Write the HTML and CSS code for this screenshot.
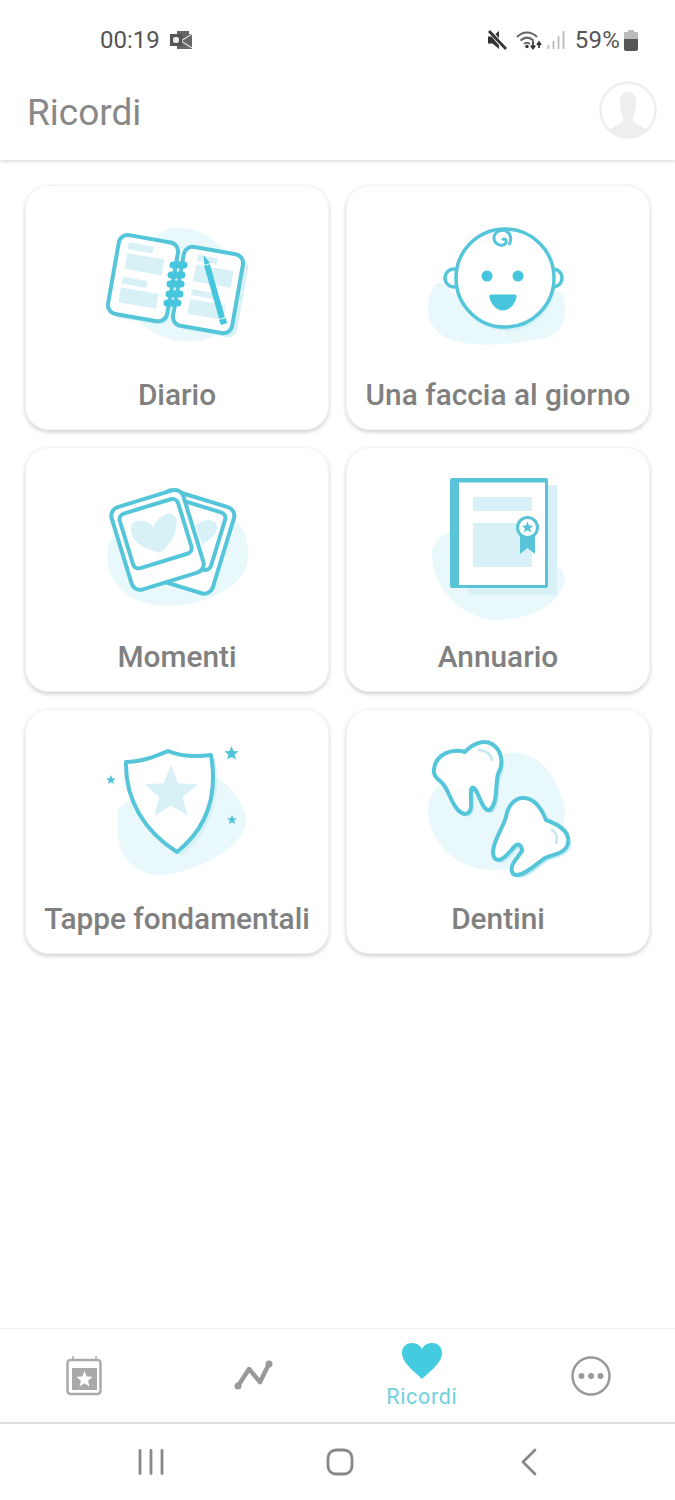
FILE: index.html
```html
<!DOCTYPE html>
<html lang="en">
<head>
    <meta charset="UTF-8">
    <meta name="viewport" content="width=device-width, initial-scale=1.0">
    <title>Ricordi</title>
    <link rel="stylesheet" href="styles.css">
</head>
<body>
<svg class="defs" width="0" height="0">
    <symbol id="star" viewBox="-10 -10 20 20">
        <polygon points="0,-10 2.6,-3.5 9.5,-3.1 4.2,1.4 5.9,8.1 0,4.5 -5.9,8.1 -4.2,1.4 -9.5,-3.1 -2.6,-3.5"/>
    </symbol>
</svg>

<header class="top">
    <div class="status">
        <span class="time">00:19</span>
        <svg class="st-outlook" width="22" height="18" viewBox="0 0 22 18">
            <path d="M7 0 H19 V3 H22 V18 H7 Z" fill="#666"/>
            <path d="M11 10 L22 3 M11 10 L22 17" stroke="#ddd" stroke-width="1.200" fill="none"/>
            <rect x="0" y="3" width="12" height="12" fill="#555"/>
            <rect x="3" y="6" width="6" height="6" rx="2.500" fill="#eee"/>
        </svg>
        <div class="status-right">
            <svg width="20" height="20" viewBox="0 0 20 20">
                <path d="M1 6.500 H5.500 L12 1 V19 L5.500 13.500 H1 Z" fill="#333"/>
                <path d="M2 0 L19 20" stroke="#fff" stroke-width="4.500"/>
                <path d="M2 1 L19 19" stroke="#333" stroke-width="2.800"/>
            </svg>
            <svg class="st-wifi" width="26" height="20" viewBox="0 0 26 20">
                <path d="M1 7 C7 1 15 1 21 7 M4.500 10.500 C9 6.500 13 6.500 17.500 10.500 M8 14 C10 12.300 12 12.300 14 14" fill="none" stroke="#666" stroke-width="2"/>
                <circle cx="11" cy="16.500" r="1.700" fill="#333"/>
                <path d="M17 11 V18 M14.800 15.500 L17 18.500 L19.200 15.500 M23 18 V13 M21 15 L23 12 L25 15" fill="none" stroke="#333" stroke-width="1.700"/>
            </svg>
            <svg class="st-signal" width="18" height="20" viewBox="0 0 18 20">
                <path d="M1.500 19 V15 M6.500 19 V11 M11.500 19 V6 M16.500 19 V1" stroke="#bbb" stroke-width="1.800"/>
            </svg>
            <span class="pct">59%</span>
            <svg class="st-battery" width="14" height="21" viewBox="0 0 14 21">
                <path d="M4 0 H10 V2 H13 Q14 2 14 3 V9 H0 V3 Q0 2 1 2 H4 Z" fill="#bbb"/>
                <path d="M0 9 H14 V19 Q14 21 12 21 H2 Q0 21 0 19 Z" fill="#555"/>
            </svg>
        </div>
    </div>
    <div class="title-bar">
        <h1>Ricordi</h1>
        <svg width="58" height="58" viewBox="0 0 58 58">
            <circle cx="29" cy="29" r="27.500" fill="#fff" stroke="#eee" stroke-width="2.500"/>
            <path d="M29 11 C36 11 38 18 37 26 C36 33 33 36 34 40 C35 43 42 44 47 49 C41 54 36 56 29 56 C22 56 17 54 11 49 C16 44 23 43 24 40 C25 36 22 33 21 26 C20 18 22 11 29 11 Z" fill="#eeeeee"/>
        </svg>
    </div>
</header>

<main class="grid">
    <a class="card">
        <svg class="art" viewBox="2 0 170 150">
            <path class="blob" d="M80 13 C110 9 135 30 150 55 C160 80 150 105 125 120 C100 133 70 125 50 108 C35 90 45 25 80 13 Z"/>
            <rect class="pale" x="27" y="27" width="58" height="80" rx="9" transform="rotate(10 56 67)"/>
            <rect class="pale" x="93" y="39" width="60" height="80" rx="9" transform="rotate(10 123 79)"/>
            <g transform="rotate(10 52 63)">
                <rect class="ln white" x="23" y="23" width="60" height="80" rx="9"/>
                <rect class="pale" x="33" y="30" width="25" height="7"/>
                <rect class="pale" x="33" y="41" width="38" height="16"/>
                <rect class="pale" x="33" y="65" width="25" height="7"/>
                <rect class="pale" x="33" y="76" width="38" height="15"/>
            </g>
            <g transform="rotate(10 118 75)">
                <rect class="ln white" x="88" y="35" width="60" height="80" rx="9"/>
                <rect class="pale" x="102" y="42" width="20" height="6"/>
                <rect class="pale" x="102" y="52" width="38" height="17"/>
                <rect class="pale" x="102" y="77" width="26" height="6"/>
                <rect class="pale" x="102" y="87" width="36" height="15"/>
            </g>
            <path class="rings" d="M83 50 H94 M81 60 H92 M80 69 H91 M79 79 H90 M77 88 H88"/>
            <path class="pen" d="M117 50 L132 103"/>
            <path class="solid" d="M113.500 40 L120 48 L114.500 50 Z M129 105 L136 103 L137 108 L131 110 Z"/>
        </svg>
        <span class="label">Diario</span>
    </a>
    <a class="card">
        <svg class="art" viewBox="-2 0 170 150">
            <path class="blob" d="M13 90 C15 70 25 60 35 75 C50 90 110 90 135 75 C145 70 152 85 150 100 C147 118 135 124 110 126 C85 131 50 132 30 122 C18 115 12 105 13 90 Z"/>
            <circle class="pale-soft" cx="92" cy="67" r="49"/>
            <circle class="ln white face" cx="39" cy="63" r="9"/>
            <circle class="ln white face" cx="138" cy="63" r="9"/>
            <circle class="ln white face" cx="90" cy="63" r="49"/>
            <path class="ln thin" d="M87 25 C90 22 93 26 90 29 C86 32 79 29 79 23 C79 17 86 14 91 16 C96 18 97 25 94 30"/>
            <circle class="solid" cx="72" cy="61" r="5.500"/>
            <circle class="solid" cx="103" cy="61" r="5.500"/>
            <path class="solid" d="M76 79.500 H100 Q102 79.500 101.500 82 C100 90 94 95.500 88 95.500 C82 95.500 76 90 74.500 82 Q74 79.500 76 79.500 Z"/>
        </svg>
        <span class="label">Una faccia al giorno</span>
    </a>
    <a class="card">
        <svg class="art" viewBox="2 2 170 150">
            <path class="blob" d="M20 65 C50 40 130 25 150 50 C165 75 160 105 130 118 C100 135 55 135 35 118 C18 105 14 85 20 65 Z"/>
            <g transform="rotate(17 98 67)">
                <rect class="ln white" x="61" y="22" width="74" height="90" rx="9"/>
                <rect class="ln" x="69" y="29" width="58" height="60" rx="6"/>
            </g>
            <path class="pale" d="M113 46 C120 43 128 47 127 54 C126 60 120 65 112 69 L105 50 Z"/>
            <g transform="rotate(-17 67 65)">
                <rect class="ln white" x="30" y="22" width="75" height="86" rx="9"/>
                <rect class="ln" x="37" y="30" width="61" height="57" rx="6"/>
            </g>
            <path class="pale" d="M43 48 C50 43 60 46 63 53 C66 44 75 37 82 39 C89 42 87 54 84 61 C80 68 75 74 70 78 C60 75 48 71 44 64 C40 58 40 52 43 48 Z"/>
        </svg>
        <span class="label">Momenti</span>
    </a>
    <a class="card">
        <svg class="art" viewBox="-2 7 170 150">
            <path class="blob" d="M17 80 C25 60 45 55 70 60 C110 70 150 90 150 110 C145 135 115 150 80 150 C45 148 15 115 17 80 Z"/>
            <rect class="pale" x="53" y="15" width="89" height="110"/>
            <rect class="book" x="35" y="8" width="98" height="110" rx="2"/>
            <rect class="white-fill" x="44" y="12.500" width="86" height="102.500"/>
            <rect class="pale" x="58" y="27" width="59" height="14"/>
            <rect class="pale" x="58" y="53" width="59" height="44"/>
            <path class="ribbon" d="M105 64 H120 V84 L112.500 78 L105 84 Z"/>
            <circle class="ribbon-ring" cx="112.500" cy="57.500" r="10"/>
            <use class="star-dark" href="#star" x="106.500" y="51.500" width="12" height="12"/>
        </svg>
        <span class="label">Annuario</span>
    </a>
    <a class="card">
        <svg class="art" viewBox="2 4 170 150">
            <path class="blob" d="M28 75 C50 50 110 38 127 42 C145 55 158 75 156 90 C150 112 115 133 75 140 C50 142 28 125 28 100 Z"/>
            <path class="pale" d="M40 30 C56 30 70 24 82 19 C94 24 110 25 125 23 C132 63 122 95 91 122 C59 100 39 68 40 30 Z"/>
            <path class="ln white" d="M36 27 C52 27 66 21 78 16 C90 21 106 22 121 20 C128 60 118 92 87 117 C55 97 35 65 36 27 Z"/>
            <use class="star-pale" href="#star" x="53" y="30" width="56" height="56"/>
            <use class="star-dark" href="#star" x="134" y="11" width="15" height="15"/>
            <use class="star-dark" href="#star" x="16" y="40" width="10" height="10"/>
            <use class="star-dark" href="#star" x="137" y="80" width="10" height="10"/>
        </svg>
        <span class="label">Tappe fondamentali</span>
    </a>
    <a class="card">
        <svg class="art" viewBox="-2 4 170 150">
            <path class="blob" d="M13 70 C20 40 60 25 95 18 C125 15 145 45 150 75 C150 110 120 130 85 135 C45 138 12 110 13 70 Z"/>
            <path class="tooth-shadow" d="M22 37 C24 22 40 16 53 20 C60 12 72 7 80 12 C90 18 92 32 86 42 C83 55 86 70 78 78 C70 80 68 62 62 56 C58 54 59 60 59 70 C60 84 52 84 46 78 C38 70 36 54 28 49 C24 46 21 42 22 37 Z"/>
            <path class="tooth-shadow" d="M111 66 C121 66 129 75 134 88 C148 93 158 100 156 111 C154 121 143 122 133 126 C123 133 113 143 105 143 C99 143 98 136 102 130 L110 119 C110 113 106 111 103 114 C98 119 93 127 87 128 C81 128 80 121 82 114 C85 103 91 95 94 85 C96 73 103 66 111 66 Z"/>
            <path class="ln white" d="M19 34 C21 19 37 13 50 17 C57 9 69 4 77 9 C87 15 89 29 83 39 C80 52 83 67 75 75 C67 77 65 59 59 53 C55 51 56 57 56 67 C57 81 49 81 43 75 C35 67 33 51 25 46 C21 43 18 39 19 34 Z"/>
            <path class="ln white" d="M108 63 C118 63 126 72 131 85 C145 90 155 97 153 108 C151 118 140 119 130 123 C120 130 110 140 102 140 C96 140 95 133 99 127 L107 116 C107 110 103 108 100 111 C95 116 90 124 84 125 C78 125 77 118 79 111 C82 100 88 92 91 82 C93 70 100 63 108 63 Z"/>
            <path class="gleam" d="M64 15 C70 15 76 19 77 25 M137 95 C141 97 143 102 141 108"/>
        </svg>
        <span class="label">Dentini</span>
    </a>
</main>

<nav class="tabs">
    <div class="tab">
        <svg width="36" height="40" viewBox="0 0 36 40">
            <path d="M7 0 V5 M30 0 V5" stroke="#aaa" stroke-width="1.500"/>
            <rect x="1.500" y="4" width="33" height="34" rx="3" fill="none" stroke="#aaa" stroke-width="2.500"/>
            <rect x="6" y="12" width="25" height="22" fill="#a9a9a9"/>
            <use class="star-white" href="#star" x="10" y="15" width="17" height="17"/>
        </svg>
    </div>
    <div class="tab">
        <svg width="40" height="32" viewBox="0 0 40 32">
            <path d="M5 26 L16 9 L27 22 L36 4" fill="none" stroke="#999" stroke-width="4.500" stroke-linejoin="round"/>
            <circle cx="5" cy="26" r="3.500" fill="#999"/>
            <circle cx="36" cy="4" r="3.500" fill="#999"/>
        </svg>
    </div>
    <div class="tab active">
        <svg width="40" height="36" viewBox="0 0 40 36">
            <path d="M20 36 C12 28 0 20 0 10 C0 3 5 0 10 0 C14 0 18 2 20 6 C22 2 26 0 30 0 C35 0 40 3 40 10 C40 20 28 28 20 36 Z" fill="#43cbe0"/>
        </svg>
        <span>Ricordi</span>
    </div>
    <div class="tab">
        <svg width="40" height="40" viewBox="0 0 40 40">
            <circle cx="20" cy="20" r="18.500" fill="none" stroke="#999" stroke-width="2.500"/>
            <circle cx="10.500" cy="20" r="3" fill="#999"/>
            <circle cx="20" cy="20" r="3" fill="#999"/>
            <circle cx="29.500" cy="20" r="3" fill="#999"/>
        </svg>
    </div>
</nav>

<footer class="sys">
    <svg width="26" height="26" viewBox="0 0 26 26">
        <path d="M2 1.500 V24.500 M13 1.500 V24.500 M24 1.500 V24.500" stroke="#888" stroke-width="2.800" stroke-linecap="round"/>
    </svg>
    <svg width="28" height="28" viewBox="0 0 28 28">
        <rect x="2" y="2" width="24" height="24" rx="8" fill="none" stroke="#888" stroke-width="2.800"/>
    </svg>
    <svg width="18" height="28" viewBox="0 0 18 28">
        <path d="M15 2 L3 14 L15 26" fill="none" stroke="#888" stroke-width="2.800" stroke-linecap="round" stroke-linejoin="round"/>
    </svg>
</footer>
</body>
</html>
```
FILE: styles.css
```css
body {
    margin: 0;
    height: 1500px;
    display: flex;
    flex-direction: column;
    background: #fff;
    font-family: Roboto, "Liberation Sans", sans-serif;
    overflow: hidden;
}

.defs {
    position: absolute;
}

/* top area */
.top {
    height: 160px;
    flex: none;
    box-shadow: 0 1px 4px rgba(0, 0, 0, 0.18);
    position: relative;
}

.status {
    height: 80px;
    display: flex;
    align-items: center;
    padding: 0 37px 0 100px;
    color: #555;
    font-size: 24px;
}

.st-outlook {
    margin-left: 10px;
}

.status-right {
    margin-left: auto;
    display: flex;
    align-items: center;
}

.st-wifi {
    margin-left: 9px;
}

.st-signal {
    margin-left: 5px;
}

.pct {
    margin-left: 10px;
    letter-spacing: 0.2px;
}

.st-battery {
    margin-left: 4px;
}

.title-bar {
    height: 80px;
    display: flex;
    align-items: center;
    justify-content: space-between;
    padding: 0 18px 0 27px;
}

h1 {
    margin: 0;
    font-size: 37px;
    font-weight: 400;
    color: #888;
    position: relative;
    top: -8px;
}

.title-bar svg {
    position: relative;
    top: -10px;
}

/* cards */
.grid {
    flex: 1;
    display: grid;
    grid-template-columns: 304px 304px;
    grid-auto-rows: 245px;
    gap: 17px;
    padding: 25px 25px 0;
    align-content: start;
}

.card {
    display: flex;
    flex-direction: column;
    align-items: center;
    border-radius: 24px;
    border: 1px solid #f3f3f3;
    box-sizing: border-box;
    box-shadow: 0 2px 4px rgba(0, 0, 0, 0.2);
    padding-top: 29px;
}

.art {
    width: 170px;
    height: 150px;
}

.label {
    margin-top: 14px;
    font-size: 29.800px;
    line-height: 32px;
    font-weight: 500;
    color: #808080;
    white-space: nowrap;
}

/* icon parts */
.blob {
    fill: #e9f8fb;
}

.pale {
    fill: #d8f1f7;
}

.pale-soft {
    fill: #d4f1f7;
}

.ln {
    fill: none;
    stroke: #55c6da;
    stroke-width: 4;
    stroke-linejoin: round;
}

.ln.white {
    fill: #fff;
}

.ln.face {
    stroke-width: 3.500;
}

.ln.thin {
    stroke-width: 3;
}

.solid {
    fill: #45c6dd;
}

.rings {
    fill: none;
    stroke: #45c6dd;
    stroke-width: 7;
    stroke-linecap: round;
}

.pen {
    fill: none;
    stroke: #45c6dd;
    stroke-width: 6;
}

.book {
    fill: #59c4d8;
}

.white-fill {
    fill: #fff;
}

.ribbon {
    fill: #59c4d8;
}

.ribbon-ring {
    fill: #fff;
    stroke: #59c4d8;
    stroke-width: 3;
}

.star-dark {
    fill: #52c3d8;
}

.star-pale {
    fill: #d8f1f7;
}

.star-white {
    fill: #fff;
}

.tooth-shadow {
    fill: #c9edf5;
}

.gleam {
    fill: none;
    stroke: #c4e8ee;
    stroke-width: 2.500;
    stroke-linecap: round;
}

/* bottom tabs */
.tabs {
    height: 93px;
    flex: none;
    display: grid;
    grid-template-columns: repeat(4, 1fr);
    border-top: 1px solid #f2f2f2;
    border-bottom: 2px solid #ddd;
}

.tab {
    display: flex;
    flex-direction: column;
    align-items: center;
    justify-content: center;
}

.tab.active span {
    font-size: 21.500px;
    line-height: 24px;
    margin-top: 6px;
    color: #6fd0e0;
    letter-spacing: 0.7px;
}

.sys {
    height: 76px;
    flex: none;
    display: grid;
    grid-template-columns: repeat(3, 189px);
    justify-content: center;
    justify-items: center;
    align-items: center;
    padding-left: 5px;
}
```
